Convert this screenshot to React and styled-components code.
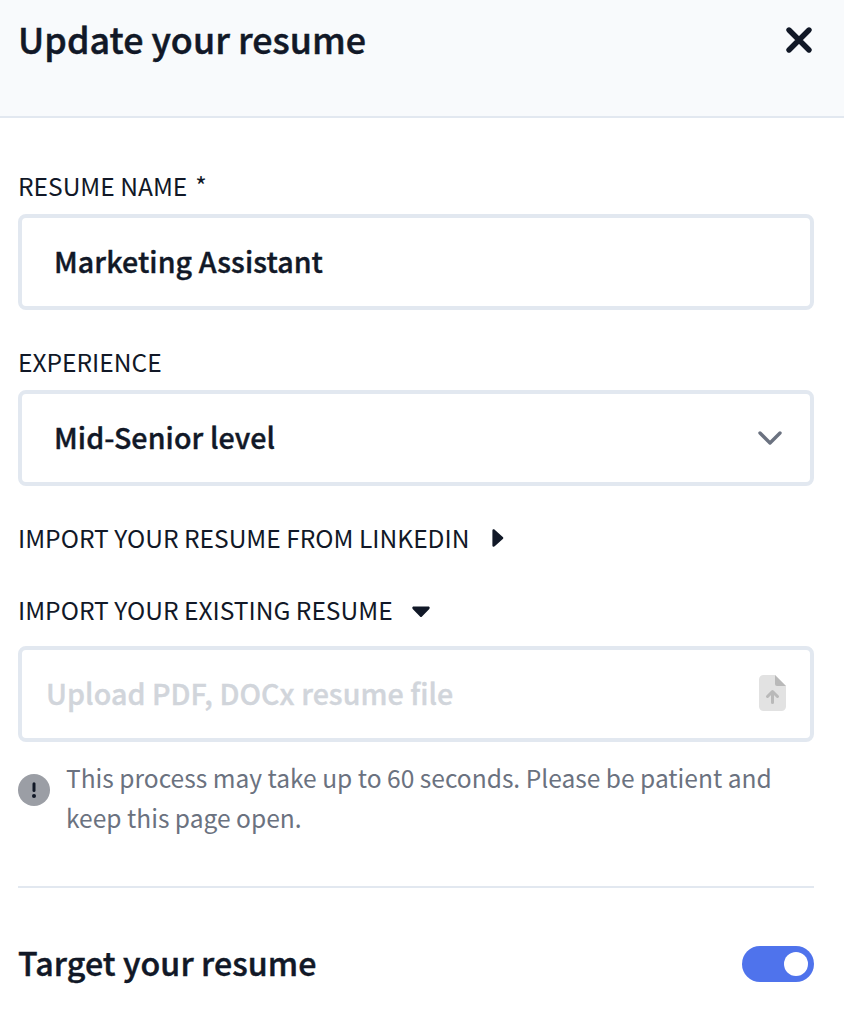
import React, { useState } from "react";
import styled, { createGlobalStyle } from "styled-components";

const App = () => {
  const [name, setName] = useState("Marketing Assistant");
  const [target, setTarget] = useState(true);

  return (
    <React.Fragment>
      <GlobalStyle />
      <Header>
        <Title>Update your resume</Title>
        <CloseButton aria-label="Close">
          <svg width="28" height="28" viewBox="0 0 28 28" fill="none">
            <path
              d="M4 4L24 24M24 4L4 24"
              stroke="#111827"
              strokeWidth="5.4"
              strokeLinecap="round"
            />
          </svg>
        </CloseButton>
      </Header>

      <Body>
        <Field>
          <Label>
            RESUME NAME <Required>*</Required>
          </Label>
          <Box>
            <Input value={name} onChange={(e) => setName(e.target.value)} />
          </Box>
        </Field>

        <Field>
          <Label>EXPERIENCE</Label>
          <Box>
            <Value>Mid-Senior level</Value>
            <Chevron width="24" height="14" viewBox="0 0 24 14" fill="none">
              <path
                d="M2 2L12 12L22 2"
                stroke="#6b7280"
                strokeWidth="3.4"
                strokeLinecap="round"
                strokeLinejoin="round"
              />
            </Chevron>
          </Box>
        </Field>

        <Label>
          IMPORT YOUR RESUME FROM LINKEDIN
          <Caret $left={23} width="12" height="18" viewBox="0 0 12 18">
            <path d="M0.4 1.6C0.4 0.3 1.8 -0.1 2.7 0.7L10.8 8C11.5 8.6 11.5 9.4 10.8 10L2.7 17.3C1.8 18.1 0.4 17.7 0.4 16.4Z" />
          </Caret>
        </Label>

        <Field $gap={16}>
          <Label>
            IMPORT YOUR EXISTING RESUME
            <Caret $left={19} $top={3} width="18" height="12" viewBox="0 0 18 12">
              <path d="M1.6 0.6C0.3 0.6 -0.1 2 0.7 2.9L8 10.4C8.6 11.1 9.4 11.1 10 10.4L17.3 2.9C18.1 2 17.7 0.6 16.4 0.6Z" />
            </Caret>
          </Label>
          <Box $upload>
            <Placeholder>Upload PDF, DOCx resume file</Placeholder>
            <FileIcon width="27" height="36" viewBox="0 0 27 36" fill="none">
              <path
                d="M4.5 0H16L27 11V31.5A4.5 4.5 0 0 1 22.5 36H4.5A4.5 4.5 0 0 1 0 31.5V4.5A4.5 4.5 0 0 1 4.5 0Z"
                fill="#e2e2e2"
              />
              <path d="M16 0L27 11H18A2 2 0 0 1 16 9Z" fill="#b9b9b9" />
              <path
                d="M13.5 27.5V17M8.5 21.5L13.5 16.5L18.5 21.5"
                stroke="#b9b9b9"
                strokeWidth="3"
                strokeLinecap="round"
                strokeLinejoin="round"
              />
            </FileIcon>
          </Box>
        </Field>

        <Note>
          <NoteIcon width="32" height="32" viewBox="0 0 32 32">
            <circle cx="16" cy="16" r="16" fill="#9b9ea5" />
            <path
              d="M16 9.7V16.6"
              stroke="#111827"
              strokeWidth="3"
              strokeLinecap="round"
            />
            <circle cx="16" cy="22" r="2" fill="#111827" />
          </NoteIcon>
          <NoteText>
            This process may take up to 60 seconds. Please be patient and keep
            this page open.
          </NoteText>
        </Note>

        <TargetRow>
          <SectionTitle>Target your resume</SectionTitle>
          <Toggle
            role="switch"
            aria-checked={target}
            $on={target}
            onClick={() => setTarget(!target)}
          >
            <Knob />
          </Toggle>
        </TargetRow>
      </Body>
    </React.Fragment>
  );
};

export default App;

const GlobalStyle = createGlobalStyle`
  * {
    box-sizing: border-box;
  }

  body {
    margin: 0;
    background: #ffffff;
    color: #111827;
    font-family: "Noto Sans CJK SC", "Noto Sans", sans-serif;
    overflow: hidden;
  }

  button, input {
    font-family: inherit;
    color: inherit;
    border: none;
    padding: 0;
    background: none;
  }

  svg {
    display: block;
    flex-shrink: 0;
  }
`;

const Header = styled.header`
  height: 118px;
  padding: 8px 31px 0 18px;
  display: flex;
  justify-content: space-between;
  align-items: flex-start;
  background: #f8fafc;
  border-bottom: 2px solid #e2e8f0;
`;

const Title = styled.h1`
  margin: 0;
  font-size: 35.8px;
  font-weight: 500;
  line-height: 60px;
  letter-spacing: 0.05px;
  -webkit-text-stroke: 0.5px;
`;

const CloseButton = styled.button`
  margin-top: 18px;
  cursor: pointer;
`;

const Body = styled.main`
  padding: 48px 30px 0 18px;
  display: flex;
  flex-direction: column;
  gap: 32px;
`;

const Field = styled.div`
  display: flex;
  flex-direction: column;
  gap: ${(props) => props.$gap || 8}px;
`;

const Label = styled.div`
  height: 40px;
  display: flex;
  align-items: center;
  font-size: 24.55px;
  line-height: 38px;
`;

const Required = styled.span`
  margin-left: 8px;
`;

const Caret = styled.svg`
  margin-left: ${(props) => props.$left}px;
  margin-top: ${(props) => props.$top || 0}px;
  fill: #111827;
`;

const Box = styled.div`
  height: 96px;
  padding: ${(props) => (props.$upload ? "0 24px 2px" : "0 28px 0 32px")};
  display: flex;
  align-items: center;
  justify-content: space-between;
  border: 4px solid #e2e8f0;
  border-radius: 8px;
  font-size: 28.6px;
  font-weight: 500;
  line-height: 44px;
  letter-spacing: 0.09px;
  -webkit-text-stroke: 0.4px;
`;

const Input = styled.input`
  width: 100%;
  padding-bottom: 2px;
  font-size: inherit;
  font-weight: inherit;
  line-height: inherit;
  letter-spacing: inherit;
  outline: none;
`;

const Value = styled.span`
  padding-bottom: 2px;
`;

const Chevron = styled.svg``;

const Placeholder = styled.span`
  color: #d1d5db;
  letter-spacing: 0.06px;
`;

const FileIcon = styled.svg`
  margin-bottom: 1px;
`;

const Note = styled.div`
  margin-top: -16px;
  padding-bottom: 48px;
  display: flex;
  align-items: flex-start;
  gap: 16px;
  border-bottom: 2px solid #e2e8f0;
`;

const NoteIcon = styled.svg`
  margin-top: 16px;
`;

const NoteText = styled.p`
  margin: 0;
  color: #6b7280;
  font-size: 24.55px;
  line-height: 40px;
`;

const TargetRow = styled.div`
  height: 48px;
  margin-top: 20px;
  display: flex;
  align-items: center;
  justify-content: space-between;
`;

const SectionTitle = styled.h2`
  margin: 0;
  padding-bottom: 4px;
  font-size: 32.2px;
  font-weight: 500;
  line-height: 44px;
  letter-spacing: 0.1px;
  -webkit-text-stroke: 0.45px;
`;

const Toggle = styled.button`
  width: 72px;
  height: 36px;
  padding: 6px;
  display: flex;
  justify-content: ${(props) => (props.$on ? "flex-end" : "flex-start")};
  border-radius: 18px;
  background: ${(props) => (props.$on ? "#4f73ec" : "#d1d5db")};
  cursor: pointer;
`;

const Knob = styled.span`
  width: 24px;
  height: 24px;
  border-radius: 50%;
  background: #ffffff;
`;
